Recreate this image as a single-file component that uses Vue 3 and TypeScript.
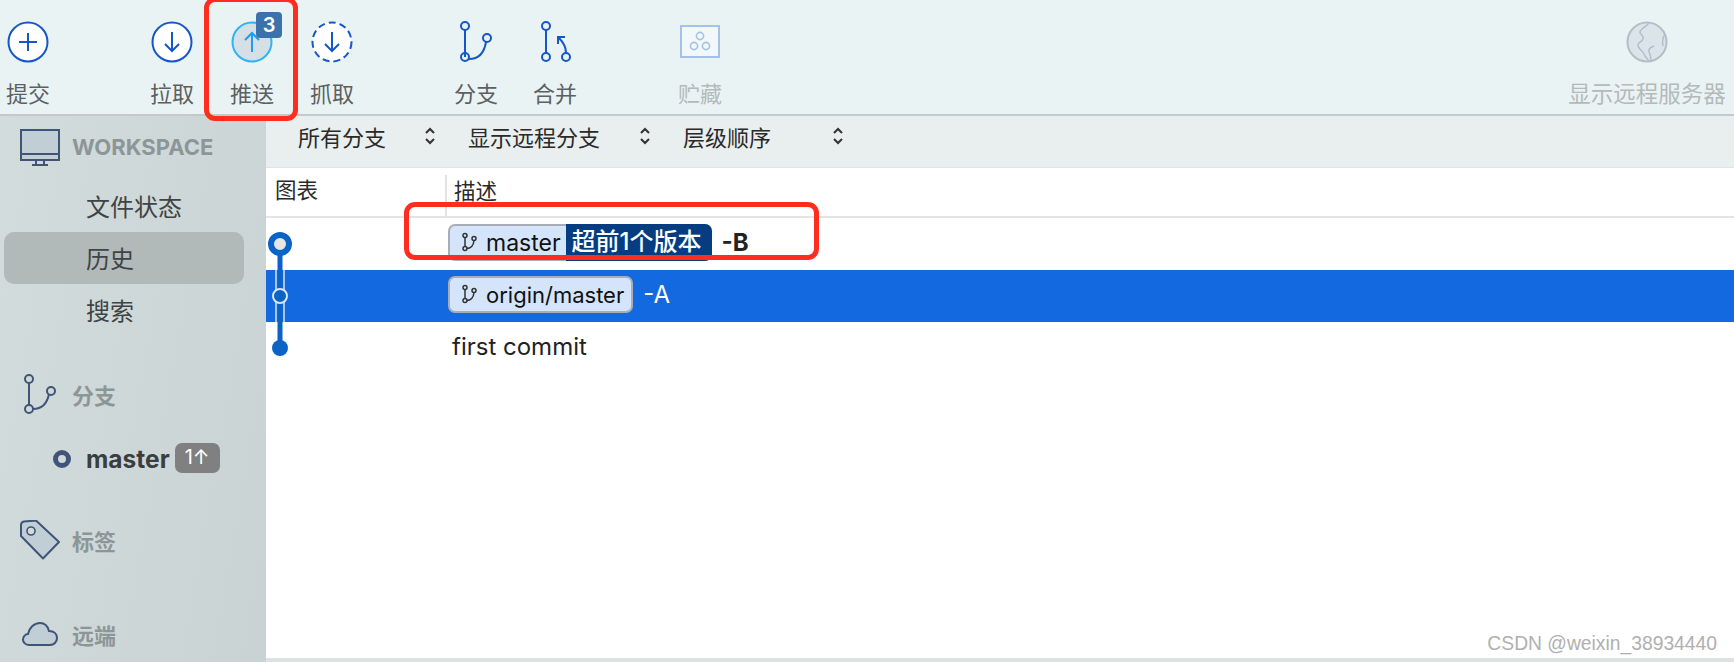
<script setup lang="ts">
const navItems = [
  { label: '文件状态', active: false },
  { label: '历史', active: true },
  { label: '搜索', active: false },
]

const filters = [
  { label: '所有分支', width: 170 },
  { label: '显示远程分支', width: 215 },
  { label: '层级顺序', width: 193 },
]
</script>

<template>
  <div class="app">
    <header class="toolbar">
      <div class="tool tool-first">
        <svg class="tool-icon" width="44" height="44" viewBox="0 0 44 44">
          <circle cx="22" cy="22" r="19.5" fill="#fff" stroke="#1557c8" stroke-width="2" />
          <path d="M22 13v18M13 22h18" fill="none" stroke="#1557c8" stroke-width="2" />
        </svg>
        <span>提交</span>
      </div>
      <div class="tool tool-pull">
        <svg class="tool-icon" width="44" height="44" viewBox="0 0 44 44">
          <circle cx="22" cy="22" r="19.5" fill="#fff" stroke="#1557c8" stroke-width="2" />
          <path d="M22 12v19M15 24l7 7 7-7" fill="none" stroke="#1557c8" stroke-width="2" />
        </svg>
        <span>拉取</span>
      </div>
      <div class="tool">
        <svg class="tool-icon" width="44" height="44" viewBox="0 0 44 44">
          <circle cx="22" cy="22" r="19.5" fill="#d5dfe6" stroke="#2db4f5" stroke-width="2" />
          <path d="M22 32V13M15 20l7-7 7 7" fill="none" stroke="#1d9cf5" stroke-width="2" />
        </svg>
        <span>推送</span>
        <b class="tool-badge">3</b>
        <i class="mark mark-push"></i>
      </div>
      <div class="tool">
        <svg class="tool-icon" width="44" height="44" viewBox="0 0 44 44">
          <circle cx="22" cy="22" r="19.5" fill="#fff" stroke="#1557c8" stroke-width="2" stroke-dasharray="7 4" />
          <path d="M22 12v19M15 24l7 7 7-7" fill="none" stroke="#1557c8" stroke-width="2" />
        </svg>
        <span>抓取</span>
      </div>
      <div class="tool tool-branch">
        <svg class="tool-icon" width="44" height="44" viewBox="0 0 44 44">
          <g fill="none" stroke="#1557c8" stroke-width="2">
            <path d="M11 10v27M15 39c9 0 15-5 17-17" />
            <circle cx="11" cy="6" r="4" />
            <circle cx="11" cy="37" r="4" />
            <circle cx="33" cy="18" r="4" />
          </g>
        </svg>
        <span>分支</span>
      </div>
      <div class="tool tool-merge">
        <svg class="tool-icon" width="44" height="44" viewBox="0 0 44 44">
          <g fill="none" stroke="#1557c8" stroke-width="2">
            <path d="M13 10v23" />
            <circle cx="13" cy="6" r="4" />
            <circle cx="13" cy="37" r="4" />
            <circle cx="33" cy="37" r="4" />
            <path d="M33 33c0-7-3-11-7-15M25 24l0-7 7 0" />
          </g>
        </svg>
        <span>合并</span>
      </div>
      <div class="tool tool-off tool-stash">
        <svg class="tool-icon" width="44" height="44" viewBox="0 0 44 44">
          <rect x="3" y="6" width="38" height="31" fill="#f2f7f9" stroke="#a4c2e8" stroke-width="2" />
          <g fill="none" stroke="#a4c2e8" stroke-width="1.6">
            <circle cx="22" cy="16" r="3.6" />
            <circle cx="16" cy="26" r="3.6" />
            <circle cx="28" cy="26" r="3.6" />
          </g>
        </svg>
        <span>贮藏</span>
      </div>
      <div class="tool tool-off tool-remote">
        <svg class="tool-icon" width="44" height="44" viewBox="0 0 44 44">
          <circle cx="22" cy="22" r="19.5" fill="#dbe5e9" stroke="#b3bec8" stroke-width="2" />
          <path d="M24 3c-3 4-9 6-9 9 0 3 4 3 3 7-1 3-5 3-5 6 0 4 5 6 6 9 1 3 3 4 5 7M29 26c-3 1-6 3-5 6 1 2 2 5 2 8M40 14c-2 3-3 7-2 12" fill="none" stroke="#b3bec8" stroke-width="1.5" />
        </svg>
        <span>显示远程服务器</span>
      </div>
    </header>

    <div class="body">
      <aside class="sidebar">
        <div class="side-head head-workspace">
          <span class="side-icon">
            <svg width="40" height="37" viewBox="0 0 40 37">
              <rect x="1" y="1" width="38" height="30" fill="#c2ced5" stroke="#3f5478" stroke-width="2" />
              <path d="M1 25h38M16 31v4M24 31v4M12 36h16" fill="none" stroke="#3f5478" stroke-width="2" />
            </svg>
          </span>
          <span class="side-title side-title-en">WORKSPACE</span>
        </div>
        <nav class="side-nav">
          <div
            v-for="item in navItems"
            :key="item.label"
            class="side-item"
            :class="{ active: item.active }"
          >
            {{ item.label }}
          </div>
        </nav>

        <div class="side-head head-branch">
          <span class="side-icon">
            <svg width="40" height="40" viewBox="0 0 40 40">
              <g fill="none" stroke="#3f5478" stroke-width="2">
                <path d="M9 9v22M13 35c8 0 14-5 16-15" />
                <circle cx="9" cy="5" r="4" />
                <circle cx="9" cy="35" r="4" />
                <circle cx="31" cy="17" r="4" />
              </g>
            </svg>
          </span>
          <span class="side-title">分支</span>
        </div>
        <div class="branch-row">
          <i class="branch-dot"></i>
          <b class="branch-name">master</b>
          <span class="ahead">1↑</span>
        </div>

        <div class="side-head head-tag">
          <span class="side-icon">
            <svg width="40" height="40" viewBox="0 0 40 40">
              <path d="M1 5Q1 2 4 1.5L16 .5 39 22 23 38.5 1 16Z" fill="#c2ced5" stroke="#3f5478" stroke-width="2" stroke-linejoin="round" />
              <circle cx="11" cy="11" r="4" fill="#d2dbdb" stroke="#3f5478" stroke-width="1.6" />
            </svg>
          </span>
          <span class="side-title">标签</span>
        </div>

        <div class="side-head head-remote">
          <span class="side-icon">
            <svg width="40" height="24" viewBox="0 0 40 24">
              <path d="M9 23C5 23 3 20 3 17.500 3 14.500 5.500 12 8 12 9 6 14 1 20 1 25 1 28 5 29 9 34 9 37 12 37 16 37 20 34 23 30 23Z" fill="#c2ced5" stroke="#3f5478" stroke-width="2" />
            </svg>
          </span>
          <span class="side-title">远端</span>
        </div>
      </aside>

      <main class="main">
        <div class="filters">
          <div v-for="f in filters" :key="f.label" class="filter" :style="{ width: f.width + 'px' }">
            <span>{{ f.label }}</span>
            <svg width="12" height="18" viewBox="0 0 12 18">
              <path d="M2 6l4-4 4 4M2 12l4 4 4-4" fill="none" stroke="#333" stroke-width="2" />
            </svg>
          </div>
        </div>
        <div class="col-head">
          <div class="col-graph">图表</div>
          <div class="col-desc">描述</div>
        </div>

        <div class="rows">
          <div class="row">
            <span class="pill">
              <svg class="pill-icon" width="18" height="22" viewBox="0 0 18 22">
                <g fill="none" stroke="#333" stroke-width="1.500">
                  <path d="M3 5.500v9M4.500 16.500c5 0 7-3 7.500-8" />
                  <circle cx="3" cy="3.500" r="2" />
                  <circle cx="3" cy="16.500" r="2" />
                  <circle cx="12" cy="6.500" r="2" />
                </g>
              </svg>
              <span class="pill-name pill-name-wide">master</span>
              <span class="pill-ahead">超前1个版本</span>
            </span>
            <b class="msg">-B</b>
          </div>
          <div class="row selected">
            <span class="pill">
              <svg class="pill-icon" width="18" height="22" viewBox="0 0 18 22">
                <g fill="none" stroke="#333" stroke-width="1.500">
                  <path d="M3 5.500v9M4.500 16.500c5 0 7-3 7.500-8" />
                  <circle cx="3" cy="3.500" r="2" />
                  <circle cx="3" cy="16.500" r="2" />
                  <circle cx="12" cy="6.500" r="2" />
                </g>
              </svg>
              <span class="pill-name">origin/master</span>
            </span>
            <span class="msg">-A</span>
          </div>
          <div class="row row-plain">first commit</div>

          <svg class="graph" width="40" height="156" viewBox="0 0 40 156">
            <path d="M10 52v52M18 52v52" stroke="#d9e6f7" stroke-width="1.500" />
            <path d="M14 26v104" stroke="#0b63c5" stroke-width="5" />
            <circle cx="14" cy="26" r="9" fill="#e6e6e6" stroke="#0b63c5" stroke-width="6" />
            <circle cx="14" cy="78" r="7" fill="#0b63c5" stroke="#dbe6f2" stroke-width="2" />
            <circle cx="14" cy="130" r="8" fill="#0b63c5" />
          </svg>

          <i class="mark mark-row"></i>
        </div>

        <span class="watermark">CSDN @weixin_38934440</span>
      </main>
    </div>
  </div>
</template>

<style>
html,
body {
  margin: 0;
  background: #fff;
}
</style>

<style scoped>
.app {
  width: 1734px;
  height: 662px;
  overflow: hidden;
  display: flex;
  flex-direction: column;
  font-family: Inter, 'Noto Sans CJK SC', sans-serif;
}

.toolbar {
  flex: none;
  box-sizing: border-box;
  height: 116px;
  display: flex;
  background: #eaf3f3;
  border-bottom: 2px solid #c3caca;
}
.tool {
  position: relative;
  flex: none;
  width: 80px;
  display: flex;
  flex-direction: column;
  align-items: center;
  font-size: 22px;
  line-height: 30px;
  color: #5b6063;
}
.tool-icon {
  margin-top: 20px;
  margin-bottom: 15px;
}
.tool-first {
  width: 56px;
}
.tool-pull {
  margin-left: 76px;
}
.tool-branch {
  margin-left: 64px;
}
.tool-merge {
  margin-left: -1px;
}
.tool-stash {
  margin-left: 65px;
}
.tool-remote {
  width: 160px;
  margin-left: auto;
  margin-right: 7px;
  font-size: 22.500px;
}
.tool-off {
  color: #b3baba;
}
.tool-badge {
  position: absolute;
  left: 44px;
  top: 12px;
  width: 26px;
  height: 26px;
  border-radius: 4px;
  background: #3b72ab;
  color: #fff;
  font-size: 20px;
  font-weight: 600;
  line-height: 26px;
  text-align: center;
}
.mark {
  position: absolute;
  box-sizing: border-box;
  border: 5px solid #ff2d20;
  border-radius: 11px;
  z-index: 5;
}
.mark-push {
  left: -8px;
  top: -3px;
  width: 94px;
  height: 124px;
}
.mark-row {
  left: 138px;
  top: -16px;
  width: 415px;
  height: 58px;
}

.body {
  flex: 1;
  display: flex;
  min-height: 0;
}
.sidebar {
  flex: none;
  width: 266px;
  overflow: hidden;
  background: linear-gradient(100deg, #d3dcdc, #c9d3d3);
}
.side-head {
  height: 40px;
  display: flex;
  align-items: center;
  gap: 12px;
  padding-left: 20px;
}
.side-icon {
  width: 40px;
  display: flex;
  justify-content: center;
}
.side-title {
  margin-top: -1px;
  font-size: 22px;
  font-weight: 700;
  color: #8d9697;
}
.side-title-en {
  margin-top: 0;
}
.head-workspace {
  margin-top: 11px;
}
.head-branch {
  margin-top: 38px;
}
.head-tag {
  margin-top: 36px;
}
.head-remote {
  margin-top: 54px;
}
.side-nav {
  margin-top: 13px;
  margin-bottom: 2px;
}
.side-item {
  width: 240px;
  height: 52px;
  margin-left: 4px;
  padding-left: 82px;
  box-sizing: border-box;
  border-radius: 10px;
  font-size: 24px;
  line-height: 56px;
  color: #3f4446;
}
.side-item.active {
  background: #b1b9b9;
}
.branch-row {
  height: 50px;
  margin-top: 20px;
  display: flex;
  align-items: center;
  padding-left: 53px;
  color: #3a3e40;
  font-size: 24.500px;
}
.branch-dot {
  box-sizing: border-box;
  width: 18px;
  height: 18px;
  margin-right: 15px;
  border: 5px solid #3f5478;
  border-radius: 50%;
}
.branch-name {
  margin-bottom: 1px;
}
.ahead {
  margin-left: 5px;
  width: 45px;
  height: 30px;
  margin-bottom: 2px;
  border-radius: 7px;
  background: #808080;
  color: #fff;
  font-size: 20px;
  font-weight: 400;
  line-height: 29px;
  text-align: center;
}

.main {
  position: relative;
  flex: 1;
  min-width: 0;
  box-sizing: border-box;
  border-bottom: 4px solid #dbe2e2;
}
.filters {
  box-sizing: border-box;
  height: 52px;
  padding-left: 32px;
  display: flex;
  align-items: center;
  background: #e9eeee;
  border-bottom: 1px solid #e1e4e4;
  font-size: 22px;
  color: #2a2a2a;
}
.filter {
  display: flex;
  align-items: center;
  justify-content: space-between;
  box-sizing: border-box;
  padding-right: 32px;
  margin-top: -12px;
}
.col-head {
  box-sizing: border-box;
  height: 50px;
  display: flex;
  align-items: center;
  border-bottom: 2px solid #e4e4e4;
  font-size: 21.500px;
  color: #2a2a2a;
}
.col-graph {
  width: 179px;
  margin-top: -8px;
  padding-left: 9px;
  box-sizing: border-box;
}
.col-desc {
  height: 42px;
  margin-top: 8px;
  padding-left: 7px;
  border-left: 2px solid #e2e2e2;
  line-height: 32px;
}
.rows {
  position: relative;
}
.row {
  box-sizing: border-box;
  height: 52px;
  display: flex;
  align-items: center;
  padding-left: 182px;
  padding-bottom: 3px;
  font-size: 24px;
  color: #222;
}
.row-plain {
  padding-left: 186px;
}
.selected {
  background: #1369e0;
  color: #fff;
}
.pill {
  box-sizing: border-box;
  height: 37px;
  display: flex;
  align-items: center;
  background: #d3e4fb;
  border: 2px solid #a9aeb6;
  border-radius: 7px;
  color: #111;
  font-size: 22px;
}
.pill-icon {
  margin-left: 12px;
  margin-right: 6px;
}
.pill-name {
  padding-right: 7px;
}
.pill-name-wide {
  padding-right: 4px;
  font-size: 23px;
}
.pill-ahead {
  height: 37px;
  margin-left: 1px;
  margin-right: -2px;
  padding: 0 10px 0 6px;
  border-radius: 0 7px 7px 0;
  background: #053d80;
  color: #fff;
  font-size: 24px;
  font-weight: 500;
  line-height: 35px;
}
.msg {
  margin-left: 10px;
}
.graph {
  position: absolute;
  left: 0;
  top: 0;
}
.watermark {
  position: absolute;
  right: 17px;
  bottom: 3px;
  font-family: 'Liberation Sans', sans-serif;
  font-size: 19.300px;
  color: #b0b0b0;
}
</style>
